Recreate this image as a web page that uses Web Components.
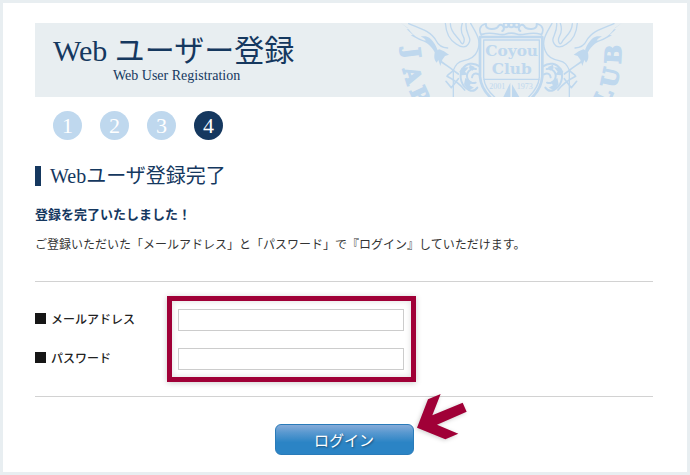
<!DOCTYPE html>
<html lang="ja">
<head>
<meta charset="utf-8">
<meta name="viewport" content="width=device-width">
<title>Web ユーザー登録</title>
<style>
  :root { --navy: #15385f; --pale: #e8eef1; --sky: #bfd8ee; --crimson: #a00037; --rule: #d2d2d2;
    --serif: "Liberation Serif", "Noto Sans CJK JP", serif; }
  html, body { margin: 0; }
  body { background: #fff; font-family: "Noto Sans CJK JP", sans-serif; font-size: 12px; color: #333; }
</style>
</head>
<body>
<registration-page>
  <page-banner slot="banner">
    <span>Web ユーザー登録</span>
    <span slot="sub">Web User Registration</span>
  </page-banner>
  <step-list slot="steps" total="4" current="4"></step-list>
  <section-heading>Webユーザ登録完了</section-heading>
  <completion-note>
    <span slot="lead">登録を完了いたしました！</span>
    ご登録いただいた「メールアドレス」と「パスワード」で『ログイン』していただけます。
  </completion-note>
  <login-form></login-form>
</registration-page>

<script>
const define = (name, html, setup) => {
  const template = document.createElement('template');
  template.innerHTML = html;
  customElements.define(name, class extends HTMLElement {
    constructor() {
      super();
      this.attachShadow({ mode: 'open' }).append(template.content.cloneNode(true));
    }
    connectedCallback() { if (setup) setup(this); }
  });
};

define('registration-page', `
  <style>
    :host { display: block; box-sizing: border-box; min-height: 100vh; border: 3px solid var(--pale); padding: 20px 34px 16px 32px; }
    main { display: flex; flex-direction: column; }
  </style>
  <slot name="banner"></slot>
  <slot name="steps"></slot>
  <main><slot></slot></main>`);

define('club-crest', `
  <style>
    :host { display: block; width: 263px; height: 74px; }
    svg { display: block; width: 100%; height: 100%; }
    .l { fill: none; stroke: var(--sky); stroke-linecap: round; stroke-linejoin: round; }
    .f { fill: var(--sky); }
    text { fill: var(--sky); font-family: "Liberation Serif", serif; font-weight: 700; text-anchor: middle; }
    .arc { font-family: "DejaVu Serif", serif; font-size: 66px; stroke: var(--sky); stroke-width: 4px; }
    .name { font-family: "DejaVu Serif", serif; font-size: 46px; }
    .year { font-size: 24px; font-weight: 400; }
  </style>
  <svg viewBox="0 24 789 222" aria-hidden="true">
    <defs>
      <g id="side">
        <path class="f" d="M33 24 L56 42 50 43 69 60 62 61 88 75 C105 80 122 88 135 113 L143 106 C138 90 124 67 107 64 L92 64 C115 78 110 80 92 72 C70 62 60 48 53 38 Z"/>
        <path class="f" d="M134 113 C132 125 132 134 140 143 L145 135 151 153 157 134 165 123 177 119 162 109 148 103 138 107Z"/>
        <path class="l" stroke-width="4" d="M56 26 C90 40 123 48 139 78 C145 91 157 98 173 99"/>
        <path class="l" stroke-width="4" d="M166 24 C168 54 180 77 200 88 C214 99 229 98 235 87 C249 69 225 58 228 25"/>
        <path class="l" stroke-width="4" d="M181 26 C182 57 207 66 213 83 C220 94 226 75 220 65 C212 51 213 36 217 25 M242 25 C255 50 277 76 262 108 C255 127 240 133 221 137 C203 141 197 149 190 166 L190 246"/>
        <path class="l" stroke-width="5" d="M151 138 C167 150 179 157 190 166 M191 166 C185 174 174 175 171 184 C185 191 205 202 224 225 M190 166 L205 177 M205 191 L184 218 L168 199"/>
        <path class="l" stroke-width="6" d="M269 154 C250 140 227 145 217 163 C205 186 215 215 237 225 C249 231 257 225 262 218 M258 162 C240 158 227 174 232 190 C235 201 247 207 257 203 M266 178 C255 172 247 177 246 187"/>
        <path class="f" d="M215 158 L236 157 225 170 233 179 214 181 208 170Z M226 189 L246 201 239 211 252 218 235 226 222 208Z M239 149 L254 156 248 167 237 160Z"/>
      </g>
    </defs>
    <use href="#side"/>
    <use href="#side" transform="translate(728 0) scale(-1 1)"/>
    <path class="l" stroke-width="8" d="M270 66 L457 66 L457 185 C455 210 444 230 426 248 M270 66 L270 185 C272 210 283 230 302 248"/>
    <path class="l" stroke-width="4" d="M281 75 H448 V187 C446 211 433 230 414 248 M281 75 V187 C283 211 295 230 316 248 M281 193 H448"/>
    <path class="l" stroke-width="5" d="M274 60 C265 45 270 31 285 27 M454 60 C463 45 458 31 443 27 M276 58 C310 47 330 65 348 57 C360 53 369 53 380 57 C398 65 420 47 452 58"/>
    <path class="l" stroke-width="6" d="M288 27 C284 47 321 45 326 32 C337 22 348 43 337 48 M440 27 C444 47 407 45 402 32 C391 22 380 43 391 48"/>
    <g class="l" stroke-width="6"><circle cx="348" cy="30" r="7"/><circle cx="364" cy="30" r="7"/><circle cx="380" cy="30" r="7"/></g>
    <path class="f" d="M361 203 V246 H340 Z M366 208 L388 246 H366 Z"/>
    <text class="name" x="365" y="124">Coyou</text>
    <text class="name" x="365" y="178">Club</text>
    <text class="year" x="322" y="223">2001</text>
    <text class="year" x="404" y="223">1973</text>
    <text class="arc" transform="translate(44 117) rotate(83)">J</text>
    <text class="arc" transform="translate(45 188) rotate(73)">A</text>
    <text class="arc" transform="translate(68 250) rotate(65)">P</text>
    <text class="arc" transform="translate(693 119) rotate(-87)">B</text>
    <text class="arc" transform="translate(684 192) rotate(-78)">U</text>
    <text class="arc" transform="translate(661 255) rotate(-65)">L</text>
  </svg>`);

define('page-banner', `
  <style>
    :host { display: flex; justify-content: space-between; overflow: hidden; height: 74px; background: var(--pale); color: var(--navy); }
    header { padding: 10px 0 0 18px; white-space: nowrap; font-family: var(--serif); }
    h1 { margin: 0; font-size: 30px; font-weight: 400; line-height: 36px; }
    p { margin: 0 0 0 60px; font-size: 14px; line-height: 14px; }
    club-crest { flex: none; }
  </style>
  <header><h1><slot></slot></h1><p><slot name="sub"></slot></p></header>
  <club-crest></club-crest>`);

define('step-list', `
  <style>
    :host { display: block; padding: 14px 0 0 18px; }
    ol { display: flex; gap: 18px; margin: 0; padding: 0; list-style: none; }
    li { width: 29px; height: 29px; border-radius: 50%; background: var(--sky); color: #fff;
      font-family: var(--serif); font-size: 22px; line-height: 29px; text-align: center; }
    li[aria-current] { background: var(--navy); }
  </style>
  <ol></ol>`, host => {
    const list = host.shadowRoot.querySelector('ol');
    list.replaceChildren();
    for (let i = 1; i <= +host.getAttribute('total'); i++) {
      const li = document.createElement('li');
      li.textContent = i;
      if (i === +host.getAttribute('current')) li.setAttribute('aria-current', 'step');
      list.append(li);
    }
  });

define('section-heading', `
  <style>
    :host { display: block; padding-top: 26px; color: var(--navy); }
    h2 { display: flex; align-items: center; gap: 9px; margin: 0; font-family: var(--serif); font-size: 20px; font-weight: 400; line-height: 20px; }
    h2::before { content: ""; width: 6px; height: 20px; background: var(--navy); }
  </style>
  <h2><slot></slot></h2>`);

define('completion-note', `
  <style>
    :host { display: block; padding: 18px 0 28px; border-bottom: 1px solid var(--rule); }
    strong { display: block; color: var(--navy); font-size: 13px; line-height: 20px; }
    p { margin: 11px 0 0; font-size: 12px; line-height: 18px; }
  </style>
  <strong><slot name="lead"></slot></strong>
  <p><slot></slot></p>`);

define('login-form', `
  <style>
    :host { display: block; }
    .fields { display: flex; padding: 14px 0; border-bottom: 1px solid var(--rule); }
    .labels { display: flex; flex-direction: column; gap: 17px; width: 132px; padding-top: 11px; }
    label { display: flex; align-items: center; gap: 5px; height: 22px; font-size: 12px; font-weight: 500; color: #222; }
    label::before { content: ""; width: 11px; height: 11px; background: #161616; }
    .frame { box-sizing: border-box; display: flex; flex-direction: column; gap: 17px; width: 249px; padding: 8px 7px 7px 6px;
      border: 5px solid var(--crimson); box-shadow: 0 1px 6px #0003, inset 0 0 6px #0002; }
    input { box-sizing: border-box; width: 100%; height: 22px; margin: 0; padding: 0 4px; border: 1px solid #ccc; background: #fff; font: inherit; }
    .actions { display: flex; justify-content: center; padding-top: 27px; }
    .anchor { position: relative; }
    button { display: block; width: 139px; height: 31px; padding: 0; border: 1px solid #2a7bb9; border-radius: 6px;
      background: linear-gradient(#86abd9, #5a99d0 25%, #2b84c5 60%, #2b84c5); color: #fff; font-family: inherit; font-size: 15px; line-height: 28px;
      text-shadow: 1px 1px 2px #0006; }
    svg { position: absolute; left: 142px; top: -30px; width: 50px; height: 46px; overflow: visible; filter: drop-shadow(-1px 1px 2px #0003); }
  </style>
  <form onsubmit="return false">
    <div class="fields">
      <div class="labels">
        <label for="mail">メールアドレス</label>
        <label for="pass">パスワード</label>
      </div>
      <div class="frame">
        <input id="mail" type="email" autocomplete="email">
        <input id="pass" type="password" autocomplete="current-password">
      </div>
    </div>
    <div class="actions">
      <div class="anchor">
        <button type="submit">ログイン</button>
        <svg viewBox="500 341 150 138" aria-hidden="true"><path fill="#a00037" d="M500 442 L533 357 571 341 546 405 637 367 649 394 560 433 624 460 585 477Z"/></svg>
      </div>
    </div>
  </form>`);
</script>
</body>
</html>
